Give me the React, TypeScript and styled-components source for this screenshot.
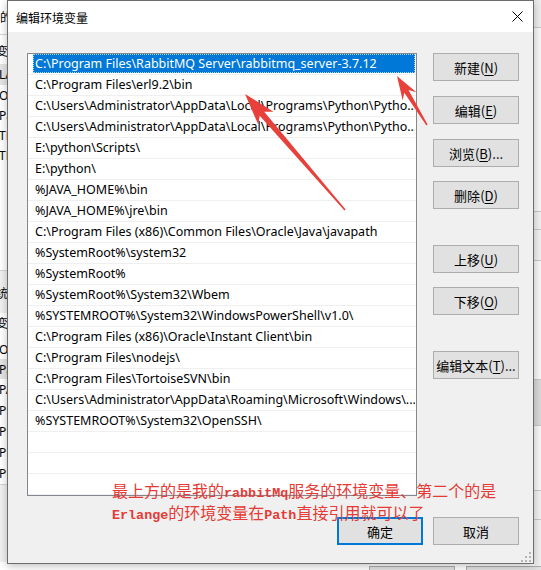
import React from "react";
import styled, { createGlobalStyle } from "styled-components";

const Global = createGlobalStyle`
  html, body { margin: 0; padding: 0; }
  body {
    width: 541px; height: 570px; overflow: hidden; background: #f0f0f0;
    font-family: "Noto Sans", "Noto Sans CJK SC", sans-serif;
  }
  #root { width: 541px; height: 570px; overflow: hidden; }
`;

const Desktop = styled.div`
  position: relative;
  width: 541px;
  height: 570px;
  overflow: hidden;
  background: #f0f0f0;
`;

/* ---------- background window (mostly hidden) ---------- */
const BackWindow = styled.div`
  display: flex;
  flex-direction: column;
  width: 560px;
  height: 570px;
`;
const BackBody = styled.div`
  display: grid;
  grid-template-columns: 534px 1fr;
  height: 564px;
`;
const BackLeft = styled.div`
  display: flex;
  flex-direction: column;
  background: #fff;
  overflow: hidden;
`;
const BackRow = styled.div<{ $h: number; $bg?: string; $line?: boolean; $shift?: number }>`
  height: ${(p) => p.$h}px;
  flex: none;
  background: ${(p) => p.$bg || "transparent"};
  border-bottom: ${(p) => (p.$line ? "1px solid #d6d6d6" : "none")};
  display: flex;
  align-items: center;
  margin-left: ${(p) => p.$shift ?? -1}px;
  font-size: 12px;
  color: #000;
  white-space: nowrap;
`;
const BackRight = styled.div`
  display: flex;
  flex-direction: column;
  background: #f0f0f0;
`;
const BackSeg = styled.div<{ $h: number; $bg?: string }>`
  height: ${(p) => p.$h}px;
  flex: none;
  background: ${(p) => p.$bg || "#f0f0f0"};
  border-bottom: 1px solid #c8c8c8;
`;
const BackFooter = styled.div`
  display: flex;
  gap: 11px;
  padding-left: 369px;
  padding-top: 2px;
`;
const BackButton = styled.div`
  width: 84px;
  height: 24px;
  background: #e1e1e1;
  border: 1px solid #adadad;
`;

/* ---------- dialog ---------- */
const Dialog = styled.div`
  position: absolute;
  left: 7px;
  top: 0;
  width: 527px;
  height: 564px;
  box-sizing: border-box;
  border: 1px solid #6d6d6d;
  background: #f0f0f0;
  box-shadow: 0 2px 8px rgba(0, 0, 0, 0.25);
  display: flex;
  flex-direction: column;
`;
const TitleBar = styled.div`
  height: 31px;
  flex: none;
  background: #fff;
  display: flex;
  align-items: center;
  justify-content: space-between;
  padding-left: 8px;
`;
const Title = styled.span`
  font-family: "Noto Sans CJK SC", sans-serif;
  font-size: 12px;
  color: #000;
  margin-top: 1px;
`;
const CloseBox = styled.div`
  width: 32px;
  height: 31px;
  display: flex;
  align-items: center;
  justify-content: center;
`;
const Body = styled.div`
  flex: 1;
  display: flex;
  flex-direction: column;
  padding: 21px 14px 19px 19px;
  position: relative;
`;
const MainRow = styled.div`
  display: flex;
  gap: 16px;
  height: 443px;
`;
const ListBox = styled.div`
  width: 390px;
  height: 443px;
  box-sizing: border-box;
  border: 1px solid #828790;
  background: #fff;
  display: flex;
  flex-direction: column;
  overflow: hidden;
`;
const Row = styled.div`
  height: 21px;
  flex: none;
  box-sizing: border-box;
  border-bottom: 1px solid #efefef;
  display: flex;
  padding: 0 1px 1px 5px;
`;
const RowFill = styled.div<{ $sel?: boolean }>`
  flex: 1;
  min-width: 0;
  display: flex;
  align-items: center;
  padding-left: 2px;
  box-sizing: border-box;
  background: ${(p) => (p.$sel ? "#0078d7" : "transparent")};
  color: ${(p) => (p.$sel ? "#fff" : "#000")};
  outline: ${(p) => (p.$sel ? "1px dotted #9fd0ff" : "none")};
  outline-offset: -1px;
  font-family: "Noto Sans", "Noto Sans CJK SC", sans-serif;
  font-size: 12.5px;
  white-space: nowrap;
  overflow: hidden;
  text-overflow: ellipsis;
`;
const ButtonCol = styled.div`
  width: 86px;
  display: flex;
  flex-direction: column;
`;
const Btn = styled.div<{ $mt?: number; $primary?: boolean }>`
  width: 86px;
  height: 28px;
  flex: none;
  box-sizing: border-box;
  margin-top: ${(p) => p.$mt ?? 0}px;
  background: #e1e1e1;
  border: ${(p) => (p.$primary ? "2px solid #0078d7" : "1px solid #adadad")};
  display: flex;
  align-items: center;
  justify-content: center;
  font-family: "Noto Sans CJK SC", sans-serif;
  font-size: 13px;
  color: #000;
  white-space: nowrap;
  u { text-decoration-thickness: 1px; text-underline-offset: 2px; }
`;
const Footer = styled.div`
  display: flex;
  justify-content: flex-end;
  gap: 10px;
  margin-top: 21px;
`;
const Grip = styled.svg`
  position: absolute;
  right: 2px;
  bottom: 2px;
`;

/* ---------- annotations ---------- */
const Note = styled.div`
  position: absolute;
  left: 112px;
  top: 481px;
  color: #e53a35;
  font-family: "Noto Sans CJK SC", sans-serif;
  font-size: 16px;
  line-height: 19px;
  white-space: nowrap;
`;
const Mono = styled.span`
  font-family: "Liberation Mono", monospace;
  font-size: 13.4px;
  font-weight: 600;
`;
const ArrowLayer = styled.svg`
  position: absolute;
  left: 0;
  top: 0;
  pointer-events: none;
`;

const paths = [
  "C:\\Program Files\\RabbitMQ Server\\rabbitmq_server-3.7.12",
  "C:\\Program Files\\erl9.2\\bin",
  "C:\\Users\\Administrator\\AppData\\Local\\Programs\\Python\\Pytho...",
  "C:\\Users\\Administrator\\AppData\\Local\\Programs\\Python\\Pytho...",
  "E:\\python\\Scripts\\",
  "E:\\python\\",
  "%JAVA_HOME%\\bin",
  "%JAVA_HOME%\\jre\\bin",
  "C:\\Program Files (x86)\\Common Files\\Oracle\\Java\\javapath",
  "%SystemRoot%\\system32",
  "%SystemRoot%",
  "%SystemRoot%\\System32\\Wbem",
  "%SYSTEMROOT%\\System32\\WindowsPowerShell\\v1.0\\",
  "C:\\Program Files (x86)\\Oracle\\Instant Client\\bin",
  "C:\\Program Files\\nodejs\\",
  "C:\\Program Files\\TortoiseSVN\\bin",
  "C:\\Users\\Administrator\\AppData\\Roaming\\Microsoft\\Windows\\...",
  "%SYSTEMROOT%\\System32\\OpenSSH\\",
  "",
  "",
  "",
];

const sideButtons: { label: string; key: string; tail?: string; mt: number }[] = [
  { label: "新建", key: "N", mt: 0 },
  { label: "编辑", key: "E", mt: 15 },
  { label: "浏览", key: "B", tail: "...", mt: 15 },
  { label: "删除", key: "D", mt: 14 },
  { label: "上移", key: "U", mt: 36 },
  { label: "下移", key: "O", mt: 14 },
  { label: "编辑文本", key: "T", tail: "...", mt: 36 },
];

const backLeftRows: { h: number; t?: string; bg?: string; line?: boolean; shift?: number }[] = [
  { h: 34, t: "的", shift: 0, line: true },
  { h: 6 },
  { h: 20, t: "变", shift: -4 },
  { h: 3 },
  { h: 21, t: "LA", bg: "#e5e5e5" },
  { h: 20, t: "O" },
  { h: 20, t: "Pa" },
  { h: 20, t: "TE" },
  { h: 20, t: "TM" },
  { h: 105, line: true },
  { h: 12, bg: "#f0f0f0" },
  { h: 20, t: "统", bg: "#f0f0f0", shift: -4 },
  { h: 10, bg: "#f0f0f0" },
  { h: 20, t: "变", shift: -4 },
  { h: 6 },
  { h: 20, t: "O" },
  { h: 20, t: "Pa", bg: "#e5e5e5" },
  { h: 21, t: "PA" },
  { h: 21, t: "PR" },
  { h: 21, t: "PR" },
  { h: 21, t: "PR" },
  { h: 21, t: "PR", line: true },
  { h: 77, bg: "#f0f0f0" },
];

const backRightSegs: { h: number; bg?: string }[] = [
  { h: 27, bg: "#ececec" },
  { h: 183, bg: "#f7f7f7" },
  { h: 17, bg: "#f0f0f0" },
  { h: 30, bg: "#f0f0f0" },
  { h: 118, bg: "#f7f7f7" },
  { h: 45, bg: "#d8d8d8" },
  { h: 64, bg: "#f7f7f7" },
  { h: 28, bg: "#f0f0f0" },
  { h: 52, bg: "#f0f0f0" },
];

function Arrow({ tip, tail, L, W, w1, w0 }: { tip: [number, number]; tail: [number, number]; L: number; W: number; w1: number; w0: number }) {
  const dx = tip[0] - tail[0];
  const dy = tip[1] - tail[1];
  const len = Math.hypot(dx, dy);
  const ux = dx / len, uy = dy / len;
  const nx = -uy, ny = ux;
  const bx = tip[0] - L * ux, by = tip[1] - L * uy;
  const ix = tip[0] - (L - 6) * ux, iy = tip[1] - (L - 6) * uy;
  const pts: [number, number][] = [
    tip,
    [bx + W * nx, by + W * ny],
    [ix + w1 * nx, iy + w1 * ny],
    [tail[0] + w0 * nx, tail[1] + w0 * ny],
    [tail[0] - w0 * nx, tail[1] - w0 * ny],
    [ix - w1 * nx, iy - w1 * ny],
    [bx - W * nx, by - W * ny],
  ];
  return <polygon points={pts.map((p) => p.map((v) => v.toFixed(1)).join(",")).join(" ")} fill="#e8403a" />;
}

export default function App() {
  return (
    <Desktop>
      <Global />
      <BackWindow>
        <BackBody>
          <BackLeft>
            {backLeftRows.map((r, i) => (
              <BackRow key={i} $h={r.h} $bg={r.bg} $line={r.line} $shift={r.shift}>
                {r.t}
              </BackRow>
            ))}
          </BackLeft>
          <BackRight>
            {backRightSegs.map((s, i) => (
              <BackSeg key={i} $h={s.h} $bg={s.bg} />
            ))}
          </BackRight>
        </BackBody>
        <BackFooter>
          <BackButton />
          <BackButton />
        </BackFooter>
      </BackWindow>

      <Dialog>
        <TitleBar>
          <Title>编辑环境变量</Title>
          <CloseBox>
            <svg width="11" height="11" viewBox="0 0 11 11">
              <path d="M0.5 0.5 L10.5 10.5 M10.5 0.5 L0.5 10.5" stroke="#000" strokeWidth="1" fill="none" />
            </svg>
          </CloseBox>
        </TitleBar>
        <Body>
          <MainRow>
            <ListBox>
              {paths.map((p, i) => (
                <Row key={i}>
                  <RowFill $sel={i === 0}>{p}</RowFill>
                </Row>
              ))}
            </ListBox>
            <ButtonCol>
              {sideButtons.map((b) => (
                <Btn key={b.key} $mt={b.mt}>
                  {b.label}(<u>{b.key}</u>){b.tail}
                </Btn>
              ))}
            </ButtonCol>
          </MainRow>
          <Footer>
            <Btn $primary>确定</Btn>
            <Btn>取消</Btn>
          </Footer>
          <Grip width="10" height="10" viewBox="0 0 10 10">
            <g fill="#b4b4b4">
              <rect x="8" y="0" width="2" height="2" />
              <rect x="4" y="4" width="2" height="2" />
              <rect x="8" y="4" width="2" height="2" />
              <rect x="0" y="8" width="2" height="2" />
              <rect x="4" y="8" width="2" height="2" />
              <rect x="8" y="8" width="2" height="2" />
            </g>
          </Grip>
        </Body>
      </Dialog>

      <ArrowLayer width="541" height="570" viewBox="0 0 541 570">
        <Arrow tip={[245, 94]} tail={[345, 210]} L={32} W={10} w1={3} w0={0.8} />
        <Arrow tip={[397, 76]} tail={[427, 125]} L={24} W={8} w1={2.5} w0={0.7} />
      </ArrowLayer>

      <Note>
        <div>
          最上方的是我的<Mono>rabbitMq</Mono>服务的环境变量、第二个的是
        </div>
        <div>
          <Mono>Erlange</Mono>的环境变量在<Mono>Path</Mono>直接引用就可以了
        </div>
      </Note>
    </Desktop>
  );
}
